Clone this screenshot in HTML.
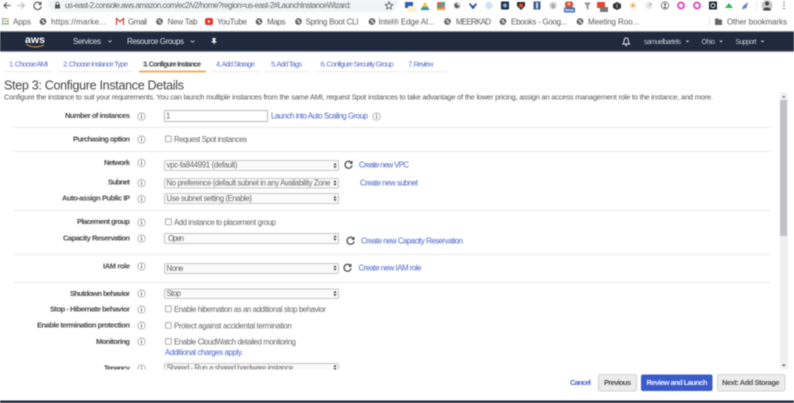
<!DOCTYPE html>
<html><head><meta charset="utf-8"><style>
html,body{margin:0;padding:0;background:#fff;width:794px;height:403px;overflow:hidden}
svg{display:block;filter:blur(.42px)}
text{font-family:"Liberation Sans",sans-serif;font-size:7px;white-space:pre}
.b{font-size:8px;fill:#5a5a5a}
.n{font-size:8px;fill:#fff;fill-opacity:.85}
.t{fill:#5b74c9;font-size:7.5px}
.l{font-weight:700;fill:#4a4a4a;text-anchor:end;font-size:7.5px}
.v{fill:#666;font-size:7.8px}
.a{fill:#4a66c9;font-size:7.8px}
.d{fill:#555;font-size:7.5px}
.s{fill:#fafafa;stroke:#b5b5b5;stroke-width:.8}
</style></head><body>
<svg width="794" height="403" viewBox="0 0 794 403" xmlns="http://www.w3.org/2000/svg">
<defs>
<g id="i"><circle r="3.7" fill="#fff" stroke="#999" stroke-width=".7"/><rect x="-.5" y="-1" width="1" height="3.1" fill="#777"/><rect x="-.5" y="-2.6" width="1" height="1" fill="#777"/></g>
<g id="g"><circle r="3.3" fill="#555"/><path d="M-2-1.5 0-.5 1-2M-1 1.5 1 .5 2 2" stroke="#fff" stroke-width=".9" fill="none"/></g>
<g id="r"><path d="M3 -1.6A3.5 3.5 0 1 0 3.5 .8" fill="none" stroke="#444" stroke-width="1.2"/><path d="M4-4V-.6H.8Z" fill="#444"/></g>
<g id="sa"><path d="M-1.6-.6 0-2.6 1.6-.6ZM-1.6.6 0 2.6 1.6 .6Z" fill="#333"/></g>
<g id="c"><rect x="0" y="0" width="5.8" height="5.8" rx=".8" fill="#fff" stroke="#888" stroke-width=".7"/></g>
<g id="ca"><path d="M-1.8-.9H1.8L0 1Z" fill="#ccc"/></g>
</defs>
<rect width="794" height="403" fill="#fff"/>

<!-- browser toolbar -->
<rect x="48" y="-8" width="350" height="20" rx="10" fill="#f1f3f4"/>
<path d="M9 5.500H2.500M5.500 2.500 2.500 5.500 5.500 8.500" transform="translate(1.500 0)" fill="none" stroke="#555" stroke-width="1.100"/>
<path d="M17 5.500H24.500M21 2.500 24.500 5.500 21 8.500" fill="none" stroke="#bbb" stroke-width="1.100"/>
<path d="M40.500 3.500A3.700 3.700 0 1 0 41.300 6.500" fill="none" stroke="#555" stroke-width="1.100"/><path d="M41.500 1.500V5H38Z" fill="#555"/>
<rect x="55" y="4.500" width="5" height="4" rx=".5" fill="#555"/><path d="M56 4.500V3.500A1.500 1.500 0 0 1 59 3.500V4.500" fill="none" stroke="#555" stroke-width=".7"/>
<text x="65" y="8" textLength="286" style="font-size:8px;fill:#666">us-east-2.console.aws.amazon.com/ec2/v2/home?region=us-east-2#LaunchInstanceWizard:</text>
<path d="M389 1.800 390.100 4.300 392.800 4.600 390.800 6.400 391.300 9 389 7.700 386.700 9 387.200 6.400 385.200 4.600 387.900 4.300Z" fill="none" stroke="#555" stroke-width=".8"/>

<!-- extensions -->
<rect x="405" y="2" width="8" height="6" fill="#2f5bb5"/><rect x="408" y="6" width="8" height="6" fill="#fbf3c4"/>
<path d="M425 2 429.500 10H420.500Z" fill="#3aa757"/><path d="M425 2 428 7H422Z" fill="#f5c242"/><path d="M421.500 8.500H428.500L429.500 10H420.500Z" fill="#3b78e7"/>
<rect x="437" y="2" width="8" height="8" fill="#3fae6a"/><rect x="437" y="2" width="4" height="3" fill="#e85d75"/><rect x="441" y="5" width="4" height="3" fill="#c66ad1"/><rect x="437" y="8" width="8" height="2" fill="#f0a030"/>
<circle cx="457" cy="5.500" r="3.800" fill="#d8d8d8"/><path d="M457 3A2.500 2.500 0 1 0 459.500 5.500H457Z" fill="#555"/>
<path d="M470 3 473 6 476 3 477 4 473.500 9H472.500L469 4Z" fill="#27509b"/>
<circle cx="489" cy="5.500" r="3.800" fill="#cfe3f5"/>
<rect x="501" y="1.500" width="8" height="8" rx="1" fill="#1d2a3a"/><circle cx="505" cy="5.500" r="2.200" fill="#7ea6d8"/>
<path d="M517 2H525V6L521 10 517 6Z" fill="#2b2b2b"/><circle cx="521" cy="5.500" r="2" fill="#e0522c"/>
<rect x="533.500" y="1.500" width="7" height="8" fill="#3c5a8c"/><rect x="536" y="2.500" width="2" height="6" fill="#cde"/>
<circle cx="553" cy="5.500" r="3.800" fill="#d5d5d5"/><text x="551.200" y="8" style="font-size:5.500px;fill:#555">S</text>
<rect x="565" y="1.500" width="8" height="6" rx="2" fill="#d2534f"/><circle cx="569" cy="4" r="1.500" fill="#f2c14e"/><rect x="564" y="7.500" width="11" height="5" rx="1" fill="#2f62a8"/><text x="565" y="11.700" style="font-size:4.300px;fill:#fff;font-weight:700">New</text>
<path d="M584 2.500H591L588.500 6V10L586.500 8.500V6Z" fill="#999"/>
<rect x="597" y="2" width="8" height="6" fill="#e0472c"/><rect x="600" y="7" width="8" height="5" fill="#777"/>
<path d="M617 2 621 4V8L617 10 613 8V4Z" fill="#333"/><path d="M617 4V8" stroke="#fff" stroke-width=".6"/>
<circle cx="633" cy="5.500" r="3.800" fill="#f7ead8"/><circle cx="633" cy="5.500" r="1.500" fill="#e8a64a"/>
<circle cx="649" cy="5.500" r="3.800" fill="#e8e8e8"/><path d="M649 5.500 651 3.500" stroke="#777" stroke-width=".7"/>
<circle cx="665" cy="5.500" r="3.700" fill="#fff" stroke="#666" stroke-width=".8"/><circle cx="665" cy="4.500" r="1.200" fill="#666"/><path d="M662.800 8 665 6 667.200 8" fill="#666"/>
<circle cx="681" cy="5.500" r="3" fill="#fff" stroke="#e040c0" stroke-width="1.800"/>
<circle cx="697" cy="5.500" r="3" fill="#fff" stroke="#e040c0" stroke-width="1.800"/>
<rect x="709" y="1.500" width="8" height="8" fill="#1a2530"/><circle cx="713" cy="5.500" r="2" fill="none" stroke="#fff" stroke-width=".9"/>
<path d="M729 3 733 8H725Z" fill="#35b35a"/>
<path d="M748 2 746.500 8 742 9.500 743 6Z" fill="#6a80c8"/>
<rect x="756" y="1" width=".7" height="10" fill="#e2e2e2"/>
<circle cx="767" cy="5.500" r="5.500" fill="#c9c9c9"/><circle cx="767" cy="3.500" r="2" fill="#444"/><path d="M763 10.500C763 6.500 771 6.500 771 10.500Z" fill="#444"/>
<circle cx="784" cy="2.500" r=".7" fill="#555"/><circle cx="784" cy="5.500" r=".7" fill="#555"/><circle cx="784" cy="8.500" r=".7" fill="#555"/>

<!-- bookmarks -->
<g fill="#e0574a"><rect x="2" y="18" width="1.600" height="1.600"/><rect x="7" y="23" width="1.600" height="1.600"/></g><g fill="#4c8bf5"><rect x="4.500" y="18" width="1.600" height="1.600"/><rect x="2" y="20.500" width="1.600" height="1.600"/></g><g fill="#f4b400"><rect x="7" y="18" width="1.600" height="1.600"/><rect x="4.500" y="20.500" width="1.600" height="1.600"/></g><g fill="#34a853"><rect x="7" y="20.500" width="1.600" height="1.600"/><rect x="2" y="23" width="1.600" height="1.600"/><rect x="4.500" y="23" width="1.600" height="1.600"/></g>
<text x="13" y="24.500" textLength="18" class="b">Apps</text>
<use href="#g" x="43" y="21.500"/><text x="51" y="24.500" textLength="55" class="b">https://marke...</text>
<path d="M116.500 25V18.500L120 21.500 123.500 18.500V25" fill="none" stroke="#d14a3c" stroke-width="1.300"/><text x="128" y="24.500" textLength="19" class="b">Gmail</text>
<use href="#g" x="159.500" y="21.500"/><text x="167.500" y="24.500" textLength="30" class="b">New Tab</text>
<rect x="205" y="18" width="8" height="7" rx="2" fill="#e3372a"/><path d="M208 19.800 210.500 21.500 208 23.200Z" fill="#fff"/><text x="217" y="24.500" textLength="30" class="b">YouTube</text>
<use href="#g" x="259" y="21.500"/><text x="267" y="24.500" textLength="18.500" class="b">Maps</text>
<use href="#g" x="298.500" y="21.500"/><text x="305.500" y="24.500" textLength="53" class="b">Spring Boot CLI</text>
<use href="#g" x="372" y="21.500"/><text x="378.500" y="24.500" textLength="56" class="b">Intel® Edge AI...</text>
<use href="#g" x="447.500" y="21.500"/><text x="456" y="24.500" textLength="35" class="b">MEERKAD</text>
<use href="#g" x="503" y="21.500"/><text x="511" y="24.500" textLength="56" class="b">Ebooks - Goog...</text>
<use href="#g" x="580" y="21.500"/><text x="588" y="24.500" textLength="51" class="b">Meeting Roo...</text>
<rect x="709" y="17" width=".7" height="9" fill="#ddd"/>
<path d="M715 18.500H718L719 19.500H722V25H715Z" fill="#666"/><text x="727" y="24.500" textLength="60" class="b">Other bookmarks</text>

<!-- aws nav -->
<rect y="31" width="794" height="1" fill="#8b8f96"/>
<rect y="32" width="794" height="19" fill="#1f2a3e"/>
<rect y="51" width="794" height="1" fill="#8f96a0"/>
<text x="25" y="43" textLength="20" style="font-size:10.500px;font-weight:700;fill:#fff">aws</text>
<path d="M26 44.500Q35 49 44 45" fill="none" stroke="#f0a030" stroke-width=".9"/>
<text x="73" y="44" textLength="28" class="n">Services</text>
<path d="M108.500 40.500 110 42 111.500 40.500" fill="none" stroke="#ddd" stroke-width=".8"/>
<text x="127" y="44" textLength="57" class="n">Resource Groups</text>
<path d="M190.500 40.500 192.500 42.200 194.500 40.500" fill="none" stroke="#ddd" stroke-width=".8"/>
<path d="M212 38H216L215 40.500 217 42.500H214.800L214 45 213.500 42.500H211L213 40.500Z" fill="#eee"/>
<path d="M623 44H629.500C628.500 43 628.500 42 628.300 40.500 628 37 624.500 37 624.200 40.500 624 42 624 43 623 44Z" fill="none" stroke="#eee" stroke-width=".9"/><circle cx="626.200" cy="45.400" r=".8" fill="#eee"/>
<text x="644" y="44" textLength="37" style="font-size:7px;fill:#c6c9cf">samuelbartels</text><use href="#ca" x="687.500" y="41.500"/>
<text x="701.500" y="44" textLength="13.500" style="font-size:7px;fill:#c6c9cf">Ohio</text><use href="#ca" x="721" y="41.500"/>
<text x="735.500" y="44" textLength="21" style="font-size:7px;fill:#c6c9cf">Support</text><use href="#ca" x="762.500" y="41.500"/>

<!-- tabs -->
<g fill="#f0f0f0"><rect x="4" y="71" width="49" height="1.300"/><rect x="58" y="71" width="75" height="1.300"/><rect x="211" y="71" width="49" height="1.300"/><rect x="265" y="71" width="45" height="1.300"/><rect x="315" y="71" width="83" height="1.300"/><rect x="403" y="71" width="45" height="1.300"/></g>
<rect x="139" y="70.500" width="67" height="2" fill="#f0b060"/>
<text x="9" y="66.500" textLength="39" class="t">1. Choose AMI</text>
<text x="63" y="66.500" textLength="65" class="t">2. Choose Instance Type</text>
<text x="143" y="66.500" textLength="58" style="fill:#444;font-weight:700;font-size:7px">3. Configure Instance</text>
<text x="216" y="66.500" textLength="39" class="t">4. Add Storage</text>
<text x="271" y="66.500" textLength="31" class="t">5. Add Tags</text>
<text x="320.500" y="66.500" textLength="73" class="t">6. Configure Security Group</text>
<text x="408" y="66.500" textLength="25.500" class="t">7. Review</text>

<text x="4" y="89.500" textLength="180" style="font-size:12.500px;fill:#444">Step 3: Configure Instance Details</text>
<text x="4" y="99.500" textLength="709" class="d">Configure the instance to suit your requirements. You can launch multiple instances from the same AMI, request Spot instances to take advantage of the lower pricing, assign an access management role to the instance, and more.</text>

<!-- scrollbar -->
<rect x="780" y="92" width="8" height="277" fill="#f0f0f2"/>
<rect x="780" y="100" width="7" height="136" fill="#c2c2c6"/>
<path d="M782 97.500H785.500L783.750 95.500Z" fill="#777"/><path d="M782 364.500H785.500L783.750 366.500Z" fill="#444"/>

<!-- dividers -->
<g fill="#e8e8e8"><rect x="14" y="127" width="756" height="1"/><rect x="14" y="151" width="756" height="1"/><rect x="14" y="210" width="756" height="1"/><rect x="14" y="254" width="756" height="1"/><rect x="14" y="282" width="756" height="1"/></g>

<!-- rows -->
<text x="130" y="118" class="l" textLength="65">Number of instances</text><use href="#i" x="141.500" y="116.500"/>
<rect x="164.500" y="110.500" width="103" height="11" fill="#fff" stroke="#aaa" stroke-width=".8"/><text x="166" y="118.500" class="v">1</text>
<text x="271" y="118.500" class="a" textLength="97">Launch into Auto Scaling Group</text><use href="#i" x="376.500" y="116.500"/>

<text x="130" y="141.500" class="l" textLength="57">Purchasing option</text><use href="#i" x="141.500" y="139.500"/>
<use href="#c" x="165.500" y="136"/><text x="174" y="142" class="v" textLength="73">Request Spot instances</text>

<text x="130" y="165" class="l" textLength="26">Network</text><use href="#i" x="141.500" y="163"/>
<rect class="s" x="164.500" y="160.500" width="174" height="10" rx="1.500"/><use href="#sa" x="335" y="165.500"/><text x="166.500" y="167.500" class="v" textLength="71">vpc-fa844991 (default)</text>
<use href="#r" x="348.500" y="164.500"/><text x="359" y="167.500" class="a" textLength="50">Create new VPC</text>

<text x="130" y="184.500" class="l" textLength="22">Subnet</text><use href="#i" x="141.500" y="183"/>
<rect class="s" x="164.500" y="178.500" width="174" height="9.500" rx="1.500"/><use href="#sa" x="335" y="183"/><text x="166.500" y="185.500" class="v" textLength="164">No preference (default subnet in any Availability Zone</text>
<text x="360" y="185.500" class="a" textLength="58">Create new subnet</text>

<text x="130" y="200.500" class="l" textLength="68">Auto-assign Public IP</text><use href="#i" x="141.500" y="199"/>
<rect class="s" x="164.500" y="193.500" width="174" height="10" rx="1.500"/><use href="#sa" x="335" y="198.500"/><text x="166.500" y="201" class="v" textLength="85.500">Use subnet setting (Enable)</text>

<text x="130" y="224" class="l" textLength="53">Placement group</text><use href="#i" x="141.500" y="222.500"/>
<use href="#c" x="165.500" y="219"/><text x="174" y="225" class="v" textLength="102">Add instance to placement group</text>

<text x="130" y="240.500" class="l" textLength="67">Capacity Reservation</text><use href="#i" x="141.500" y="238.500"/>
<rect class="s" x="164.500" y="233.500" width="174" height="10" rx="1.500"/><use href="#sa" x="335" y="238"/><text x="168" y="241" class="v" textLength="16">Open</text>
<use href="#r" x="350.500" y="240.500"/><text x="361" y="243.500" class="a" textLength="102">Create new Capacity Reservation</text>

<text x="130" y="268.500" class="l" textLength="27">IAM role</text><use href="#i" x="141.500" y="266.500"/>
<rect class="s" x="164.500" y="263.500" width="174" height="10" rx="1.500"/><use href="#sa" x="335" y="268"/><text x="166.500" y="271" class="v" textLength="17">None</text>
<use href="#r" x="347.500" y="267.500"/><text x="358.500" y="270.500" class="a" textLength="63">Create new IAM role</text>

<text x="130" y="296" class="l" textLength="60">Shutdown behavior</text><use href="#i" x="141.500" y="293.500"/>
<rect class="s" x="164.500" y="289" width="174" height="9.500" rx="1.500"/><use href="#sa" x="335" y="293.500"/><text x="166.500" y="296" class="v" textLength="14.500">Stop</text>

<text x="130" y="311.500" class="l" textLength="80">Stop - Hibernate behavior</text><use href="#i" x="141.500" y="309.500"/>
<use href="#c" x="165.500" y="306"/><text x="174" y="312" class="v" textLength="152">Enable hibernation as an additional stop behavior</text>

<text x="130" y="327.500" class="l" textLength="93">Enable termination protection</text><use href="#i" x="141.500" y="325.500"/>
<use href="#c" x="165.500" y="322.500"/><text x="174" y="328.500" class="v" textLength="118">Protect against accidental termination</text>

<text x="130" y="344" class="l" textLength="34">Monitoring</text><use href="#i" x="141.500" y="341.500"/>
<use href="#c" x="165.500" y="338.500"/><text x="174" y="344.500" class="v" textLength="122">Enable CloudWatch detailed monitoring</text>
<text x="165" y="355" class="a" textLength="78">Additional charges apply.</text>

<text x="130" y="370.500" class="l" textLength="26">Tenancy</text><use href="#i" x="141.500" y="368.500"/>
<rect class="s" x="164.500" y="363.500" width="174" height="10" rx="1.500"/><use href="#sa" x="335" y="367.500"/><text x="166.500" y="370.500" class="v" textLength="127">Shared - Run a shared hardware instance</text>

<!-- footer -->
<rect x="0" y="369.500" width="794" height="33.500" fill="#fff"/>
<text x="570" y="385" textLength="21" style="font-size:7.500px;fill:#4a66c9;font-weight:700">Cancel</text>
<rect x="598.500" y="374.500" width="38" height="16.500" rx="2" fill="#ececec" stroke="#c8c8c8" stroke-width=".8"/>
<text x="604" y="385" textLength="27" style="font-size:7.500px;fill:#555;font-weight:700">Previous</text>
<rect x="641" y="374.500" width="71.500" height="16.500" rx="2" fill="#3b5bcb"/>
<text x="646.500" y="385" textLength="61" style="font-size:7.500px;fill:#eef;font-weight:700">Review and Launch</text>
<rect x="717.500" y="374.500" width="67.500" height="16.500" rx="2" fill="#ececec" stroke="#c8c8c8" stroke-width=".8"/>
<text x="722" y="385" textLength="57.500" style="font-size:7.500px;fill:#555;font-weight:700">Next: Add Storage</text>
<rect y="400.500" width="794" height="2.500" fill="#1f2a3e"/>
</svg>
</body></html>
